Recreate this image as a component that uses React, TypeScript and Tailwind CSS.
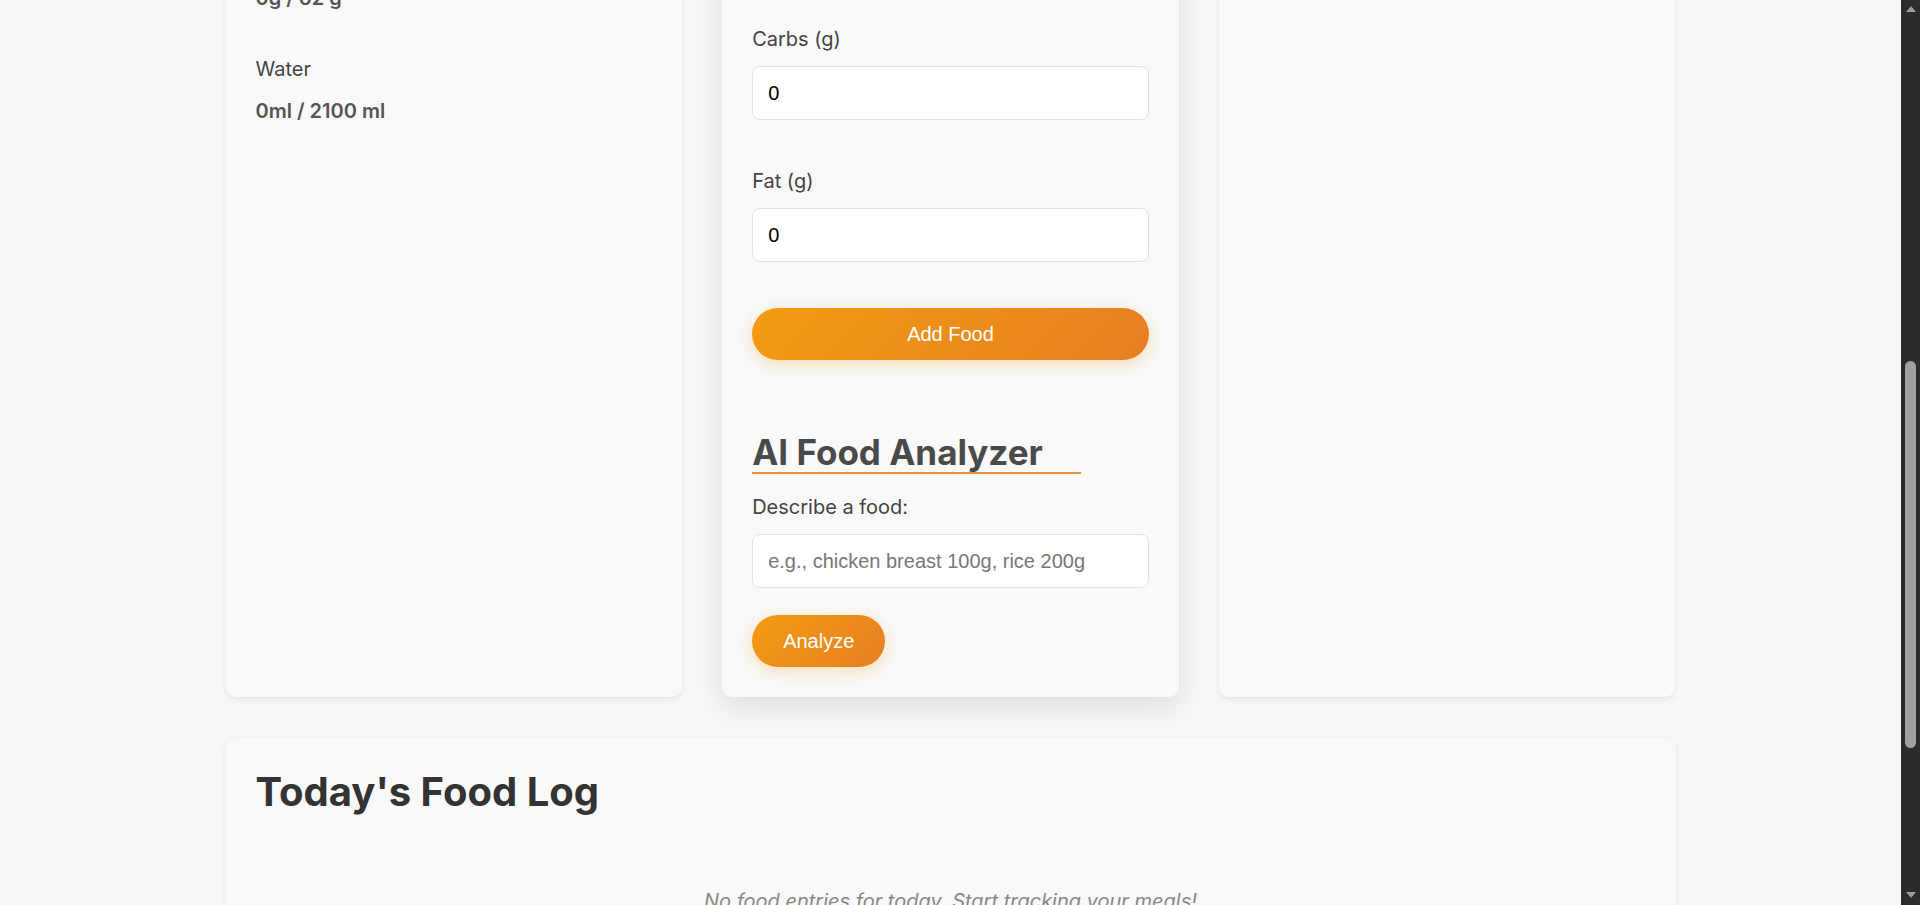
import React from "react";

const sans = "font-['Inter','Noto_Sans',sans-serif]";
const arial = "font-['Liberation_Sans',Arial,sans-serif]";

const goals = [
  { label: "Calories", value: "0 / 2000 kcal" },
  { label: "Protein", value: "0g / 150 g" },
  { label: "Carbs", value: "0g / 250 g" },
  { label: "Fat", value: "0g / 62 g" },
  { label: "Water", value: "0ml / 2100 ml" },
];

const fields = [
  { label: "Food Name", value: "", placeholder: "e.g., Apple" },
  { label: "Calories", value: "0" },
  { label: "Protein (g)", value: "0" },
  { label: "Carbs (g)", value: "0" },
  { label: "Fat (g)", value: "0" },
];

function CardTitle({ children, className = "" }: { children: React.ReactNode; className?: string }) {
  return (
    <h2
      className={`inline-block self-start pr-[38px] border-b-2 border-[#f0903a] text-[35px] leading-[39px] font-bold text-[#4a4a4a] ${className}`}
    >
      {children}
    </h2>
  );
}

function TextInput({ value, placeholder }: { value?: string; placeholder?: string }) {
  return (
    <input
      type="text"
      defaultValue={value}
      placeholder={placeholder}
      className={`${arial} w-full h-[54px] px-[15px] rounded-[8px] border border-[#e2e2e2] bg-white text-[20px] text-black placeholder:text-[#777] outline-none`}
    />
  );
}

function OrangeButton({ children, className = "" }: { children: React.ReactNode; className?: string }) {
  return (
    <button
      className={`${arial} h-[52px] rounded-full bg-[linear-gradient(135deg,#f39c12,#e67e22)] text-white text-[20px] shadow-[0_4px_15px_rgba(243,156,18,0.3)] ${className}`}
    >
      {children}
    </button>
  );
}

function Scrollbar() {
  return (
    <div className="w-[19px] shrink-0 bg-[#2c2c2c] flex flex-col items-center">
      <svg width="12" height="17" viewBox="0 0 12 17" className="shrink-0">
        <polygon points="1,12 11,12 6,6" fill="#9e9e9e" />
      </svg>
      <div className="flex-1 w-full flex flex-col items-center pt-[344px]">
        <div className="w-[11px] h-[387px] rounded-full bg-[#a0a0a0]" />
      </div>
      <svg width="12" height="16" viewBox="0 0 12 16" className="shrink-0">
        <polygon points="1,3 11,3 6,9" fill="#9e9e9e" />
      </svg>
    </div>
  );
}

export default function App() {
  return (
    <div className={`${sans} h-[905px] w-full overflow-hidden flex bg-[#f7f7f7]`}>
      <main className="flex-1 overflow-hidden">
        {/* page is scrolled: the top of the cards sits above the fold */}
        <div className="max-w-[1450px] mx-auto -mt-[494px]">
          <div className="grid grid-cols-3 gap-[40px]">
            {/* Daily goals */}
            <section className="rounded-[10px] bg-[#f9f9f9] shadow-[0_2px_6px_rgba(0,0,0,0.08)] p-[30px] flex flex-col">
              <CardTitle className="mb-[25px]">Daily Goals</CardTitle>
              {goals.map((g) => (
                <div key={g.label} className="mb-[41px]">
                  <div className="text-[20px] leading-[30px] text-[#444]">{g.label}</div>
                  <div className="mt-[12px] text-[20px] leading-[30px] font-semibold text-[#555]">{g.value}</div>
                </div>
              ))}
            </section>

            {/* Add food form */}
            <section className="rounded-[10px] bg-[#f9f9f9] shadow-[0_10px_30px_rgba(0,0,0,0.1)] p-[30px] flex flex-col">
              <CardTitle className="mb-[21px]">Add Food</CardTitle>
              {fields.map((f) => (
                <div key={f.label} className="mb-[46px] last:mb-[45px]">
                  <label className="block text-[20px] leading-[30px] text-[#444] mb-[12px]">{f.label}</label>
                  <TextInput value={f.value} placeholder={f.placeholder} />
                </div>
              ))}
              <OrangeButton className="w-full">Add Food</OrangeButton>

              <CardTitle className="mt-[73px] mb-[18px]">AI Food Analyzer</CardTitle>
              <label className="block text-[20px] leading-[30px] text-[#444] mb-[12px]">Describe a food:</label>
              <TextInput placeholder="e.g., chicken breast 100g, rice 200g" />
              <OrangeButton className="mt-[27px] self-start px-[31px]">Analyze</OrangeButton>
            </section>

            {/* Water tracker */}
            <section className="rounded-[10px] bg-[#f9f9f9] shadow-[0_2px_6px_rgba(0,0,0,0.08)] p-[30px] flex flex-col">
              <CardTitle className="mb-[25px]">Water Intake</CardTitle>
              <div className="text-[20px] leading-[30px] text-[#444]">0 ml today</div>
              <div className="mt-[20px] flex gap-[12px]">
                <OrangeButton className="px-[24px]">+250 ml</OrangeButton>
                <OrangeButton className="px-[24px]">+500 ml</OrangeButton>
              </div>
            </section>
          </div>

          <section className="mt-[41px] rounded-[10px] bg-[#f9f9f9] shadow-[0_2px_6px_rgba(0,0,0,0.08)] p-[30px]">
            <h2 className="text-[40px] leading-[48px] font-bold text-[#333] mb-[25px]">Today's Food Log</h2>
            <p className="pt-[48px] pb-[48px] text-center text-[20px] leading-[24px] italic text-[#888]">
              No food entries for today. Start tracking your meals!
            </p>
          </section>
        </div>
      </main>
      <Scrollbar />
    </div>
  );
}
